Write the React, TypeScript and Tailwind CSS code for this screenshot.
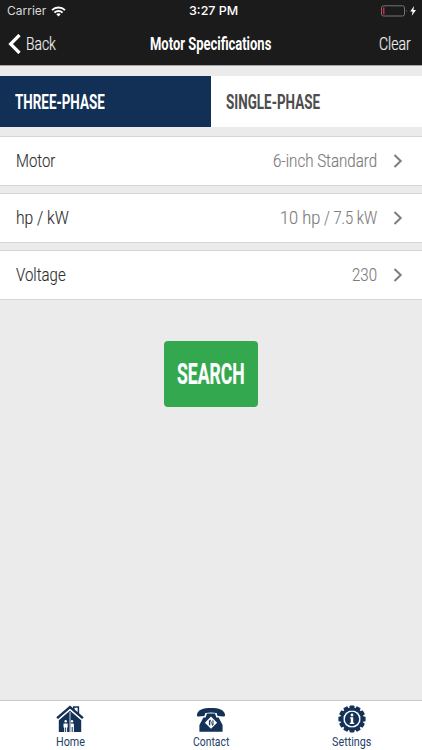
import { useLayoutEffect, useRef, useState } from "react";

type FitProps = { text: string; width: number; className?: string };

// Condenses a line of text horizontally to the given width.
function Fit({ text, width, className = "" }: FitProps) {
  const ref = useRef<HTMLSpanElement>(null);
  const [scale, setScale] = useState(1);
  useLayoutEffect(() => {
    if (ref.current) setScale(width / ref.current.offsetWidth);
  }, [text, width]);
  return (
    <span className="flex shrink-0" style={{ width }}>
      <span
        ref={ref}
        className={`block shrink-0 origin-left whitespace-nowrap ${className}`}
        style={{ transform: `scaleX(${scale})` }}
      >
        {text}
      </span>
    </span>
  );
}

function WifiIcon() {
  return (
    <svg width="15" height="11" viewBox="0 0 15 11" fill="none" stroke="#fff" strokeWidth="1.9">
      <path d="M1 4.1a9.3 9.3 0 0 1 13 0" />
      <path d="M3.4 6.6a5.9 5.9 0 0 1 8.2 0" />
      <path d="M5.3 8.3a3.2 3.2 0 0 1 4.4 0L7.5 10.6Z" fill="#fff" stroke="none" />
    </svg>
  );
}

function BatteryIcon() {
  return (
    <svg width="36" height="12" viewBox="0 0 36 12">
      <rect x="0.5" y="0.8" width="23" height="10.2" rx="2" fill="none" stroke="#747474" />
      <rect x="2" y="2.4" width="1.5" height="7" fill="#d6263b" />
      <path d="M25.2 4.2q1.4 1.7 0 3.4Z" fill="#747474" />
      <path d="M33.1 1 29.2 6.6h2.4l-.8 4.2 4.2-5.7h-2.6Z" fill="#fff" />
    </svg>
  );
}

function Chevron() {
  return (
    <svg width="10" height="14" viewBox="0 0 10 14" fill="none" stroke="#7d7d7d" strokeWidth="2">
      <path d="m1.5 1 6.2 6-6.2 6" />
    </svg>
  );
}

function HomeIcon() {
  return (
    <svg width="28" height="28" viewBox="0 0 28 28">
      <path d="M17.8 6V2h4.600v9" fill="none" stroke="#143157" strokeWidth="1.5" />
      <path d="M2.800 14.500 14 5l11.200 9.500V27H2.800Z" fill="#143157" />
      <path d="M1.200 13.300 14 2.300l12.800 11" fill="none" stroke="#143157" strokeWidth="2.800" />
      <path d="M2 15 14 4.700 26 15" fill="none" stroke="#fff" strokeWidth="1.500" />
      <path d="M14 7v20" stroke="#fff" strokeWidth="0.800" />
      <path d="M7.500 18.500h4.200v4h-.6V27h-1V22.500h-.9V27h-1v-4.500h-.7ZM14.500 18.500h2.400q1 0 1 1V27h-1.200v-5h-1V27h-1.200Z" fill="#fff" />
      <circle cx="9.700" cy="16.300" r="1.200" fill="#fff" />
      <circle cx="16" cy="16.300" r="1.200" fill="#fff" />
    </svg>
  );
}

function PhoneIcon() {
  return (
    <svg width="30" height="25" viewBox="0 0 30 25">
      <path
        d="M1 7.400C2 2.800 7 1 15 1s13 1.800 14 6.400c.3 1.600-.4 2.100-1.800 2l-5-.5c-1-.1-1.200-1-1.200-2.700-3.400-.9-8.600-.9-12 0 0 1.700-.2 2.600-1.200 2.700l-5 .5c-1.400.1-2.100-.4-1.800-2Z"
        fill="#143157"
      />
      <path d="M7.400 10.400h2.200L11 6.500h8l1.400 3.900h2.200l4 7.600v6.200q0 .6-.6.600H4q-.6 0-.6-.6V18Z" fill="#143157" />
      <path d="m15 9.600 6.100 6.100L15 21.800l-6.100-6.100Z" fill="#fff" />
      <path d="M12.900 13.800v4l1.300 1.300v-5.800l2.200 5.700 1.100-1.200v-4l-1-1v4.800l-2-5.200Z" fill="#143157" />
    </svg>
  );
}

const teeth = [0, 30, 60, 90, 120, 150, 180, 210, 240, 270, 300, 330];

function GearIcon() {
  return (
    <svg width="28" height="28" viewBox="0 0 28 28">
      {teeth.map((a) => (
        <rect key={a} x="11.600" y="0.400" width="4.800" height="5" rx="0.800" fill="#143157" transform={`rotate(${a} 14 14)`} />
      ))}
      <circle cx="14" cy="14" r="10.200" fill="none" stroke="#143157" strokeWidth="2.800" />
      <circle cx="14" cy="14" r="7.200" fill="#143157" />
      <circle cx="14" cy="10" r="1.400" fill="#fff" />
      <path d="M12 12.200h3.200v5.500h1v1.200h-4.400v-1.200h1v-4.300H12Z" fill="#fff" />
    </svg>
  );
}

const rows = [
  { label: "Motor", labelWidth: 39, value: [{ text: "6-inch Standard", width: 104 }] },
  {
    label: "hp / kW",
    labelWidth: 53,
    value: [
      { text: "10 hp", width: 40 },
      { text: "/ 7.5 kW", width: 53 },
    ],
  },
  { label: "Voltage", labelWidth: 50, value: [{ text: "230", width: 25 }] },
];

export default function App() {
  return (
    <div className="flex h-[750px] w-[422px] flex-col overflow-hidden bg-[#ebebeb] font-['Roboto',sans-serif]">
      <header className="h-[66px] border-b border-[#a6a6a6] bg-[#1b1b1b] text-white">
        <div className="flex h-[22px] items-center justify-between pr-[5px] pl-[7px] font-['Inter',sans-serif] text-[12px] leading-[22px]">
          <div className="flex w-[181px] items-center gap-[5px] text-[#d9d9d9]">
            <Fit text="Carrier" width={39} />
            <WifiIcon />
          </div>
          <Fit text="3:27 PM" width={49} className="font-medium" />
          <div className="flex w-[179px] justify-end">
            <BatteryIcon />
          </div>
        </div>
        <div className="flex h-[43px] items-center pr-[11px] pl-[8px] text-[18px] leading-[43px]">
          <div className="flex w-[142px] items-center gap-[5px] text-[#ececec]">
            <svg width="13" height="20" viewBox="0 0 13 20" fill="none" stroke="#fff" strokeWidth="3.200">
              <path d="M11.500 1 2.600 10l8.900 9" />
            </svg>
            <Fit text="Back" width={30} className="font-light [-webkit-text-stroke:0.2px_currentColor]" />
          </div>
          <Fit text="Motor Specifications" width={121} className="text-[18px] font-bold" />
          <div className="flex flex-1 justify-end text-[#ececec]">
            <Fit text="Clear" width={32} className="font-light [-webkit-text-stroke:0.2px_currentColor]" />
          </div>
        </div>
      </header>

      <div className="mt-[10px] flex h-[51px] text-[21px] leading-[52px] font-bold">
        <div className="w-[211px] bg-[#123056] pl-[15px] text-white">
          <Fit text="THREE-PHASE" width={90} />
        </div>
        <div className="w-[211px] bg-white pl-[15px] text-[#4d4d4d]">
          <Fit text="SINGLE-PHASE" width={94} />
        </div>
      </div>

      <div className="mt-[9px] flex flex-col gap-[7px]">
        {rows.map((row) => (
          <div
            key={row.label}
            className="flex h-[50px] items-center border-y border-[#d5d5d5] bg-white pr-[19px] pl-[16px] text-[18px] leading-[48px] font-light text-[#303030] [-webkit-text-stroke:0.15px_currentColor]"
          >
            <Fit text={row.label} width={row.labelWidth} />
            <div className="mr-[16px] ml-auto flex gap-[4px] text-[#7c7c7c]">
              {row.value.map((part) => (
                <Fit key={part.text} text={part.text} width={part.width} />
              ))}
            </div>
            <Chevron />
          </div>
        ))}
      </div>

      <button className="mt-[41px] ml-[164px] flex h-[66px] w-[94px] items-center justify-center rounded-[4px] bg-[#33a84f] text-[30px] leading-[66px] font-bold text-white [-webkit-text-stroke:0.2px_currentColor]">
        <Fit text="SEARCH" width={68} />
      </button>

      <footer className="mt-auto grid h-[50px] grid-cols-3 border-t border-[#c9c9c9] bg-white text-[13px] leading-[15px] text-[#244266]">
        <div className="flex flex-col items-center">
          <div className="flex h-[33px] items-end pb-[1px]">
            <HomeIcon />
          </div>
          <Fit text="Home" width={29} />
        </div>
        <div className="flex flex-col items-center">
          <div className="flex h-[33px] items-end pb-[2px]">
            <PhoneIcon />
          </div>
          <Fit text="Contact" width={36} />
        </div>
        <div className="flex flex-col items-center">
          <div className="flex h-[33px] items-end pb-[1px]">
            <GearIcon />
          </div>
          <Fit text="Settings" width={39} />
        </div>
      </footer>
    </div>
  );
}
